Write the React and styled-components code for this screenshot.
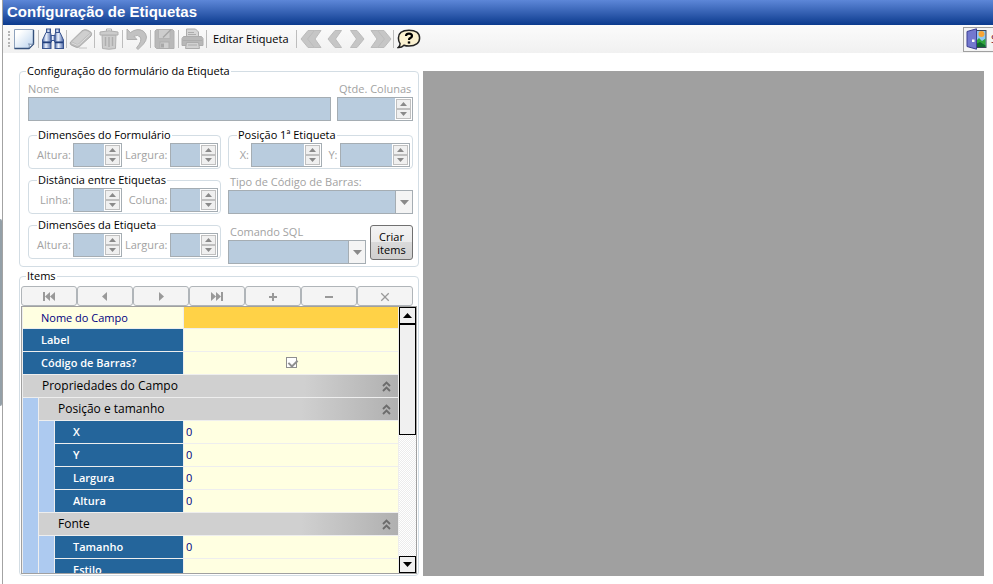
import React, { useState } from 'react';
import styled, { createGlobalStyle } from 'styled-components';

const GlobalStyle = createGlobalStyle`
  * {
    box-sizing: border-box;
  }

  body {
    margin: 0;
    background: #fff;
    color: #000;
    font-family: 'Open Sans', 'Noto Sans', sans-serif;
    font-size: 11px;
    line-height: 14px;
  }

  button, input, select {
    font: inherit;
    color: inherit;
    margin: 0;
    padding: 0;
    border-radius: 0;
  }
`;

const Window = styled.div`
  display: flex;
  height: 100vh;
  overflow: hidden;
`;

const Splitter = styled.div`
  flex: 0 0 3px;
  border-right: 1px solid #a3a3a3;
  display: flex;
  flex-direction: column;
  justify-content: center;
  padding-top: 40px;
`;

const SplitterGrip = styled.div`
  height: 187px;
  background: #94a0a8;
  border-radius: 0 2px 2px 0;
`;

const Page = styled.div`
  flex: 1;
  min-width: 0;
  display: flex;
  flex-direction: column;
`;

const TitleBar = styled.h1`
  flex: none;
  height: 25px;
  margin: 0;
  padding: 0 4px;
  background: linear-gradient(#5d87d8, #3561b3 50%, #0b3a8d);
  color: #fff;
  font: bold 15px/24px 'Liberation Sans', Arial, sans-serif;
`;

const Toolbar = styled.div`
  flex: none;
  display: flex;
  align-items: center;
  height: 28px;
  padding-left: 5px;
  background: linear-gradient(#fbfbfb, #f1f1f1);
`;

const Grip = styled.div`
  width: 3px;
  height: 16px;
  border-left: 2px dotted #b5b5b5;
`;

const ToolButton = styled.button`
  display: flex;
  align-items: center;
  justify-content: center;
  width: ${props => props.$width || 27}px;
  height: 26px;
  border: none;
  background: none;
  white-space: nowrap;
`;

const TextToolButton = styled(ToolButton)`
  width: auto;
  padding: 0 7px 0 6px;
`;

const Separator = styled.div`
  width: 1px;
  height: 18px;
  background: #bdbdbd;
`;

const ExitArea = styled.div`
  display: flex;
  align-items: center;
  gap: 2px;
  flex: 0 0 32px;
  margin-left: auto;
  overflow: hidden;
`;

const ExitButton = styled.button`
  flex: none;
  display: flex;
  align-items: center;
  gap: 4px;
  height: 25px;
  padding: 0 6px 0 2px;
  border: 1px solid #a0a0a0;
  background: #f4f4f4;
  color: #7b1230;
`;

const Main = styled.main`
  flex: 1;
  min-height: 0;
  display: flex;
  gap: 4px;
  padding: 11px 9px 8px 16px;
`;

const SidePanel = styled.div`
  flex: 0 0 400px;
  display: flex;
  flex-direction: column;
  gap: 2px;
`;

const Preview = styled.section`
  flex: 1;
  margin-top: 7px;
  background: #a0a0a0;
`;

const Group = styled.fieldset`
  min-width: 0;
  margin: 0;
  padding: ${props => props.$padding || '0'};
  border: 1px solid #d3dde4;
  border-radius: 4px;
`;

const Legend = styled.legend`
  margin-left: ${props => props.$indent || 6}px;
  padding: 0 1px;
  height: 14px;
  white-space: nowrap;
`;

const ItemsGroup = styled(Group)`
  flex: 1;
  min-height: 0;
  display: flex;
  flex-direction: column;
`;

const NameRow = styled.div`
  display: grid;
  grid-template-columns: 1fr 76px;
  gap: 6px;
`;

const Stack = styled.div`
  flex: 1;
  display: flex;
  flex-direction: column;
  gap: 1px;
  min-width: 0;
  padding-top: ${props => props.$top || 0}px;
`;

const FieldLabel = styled.label`
  padding-left: ${props => props.$indent || 0}px;
  color: #a2a2a2;
  white-space: nowrap;
`;

const FormGrid = styled.div`
  display: grid;
  grid-template-columns: 193px 1fr;
  grid-template-rows: 41px 41px 45px;
  align-items: start;
  gap: 4px 7px;
  padding-top: 7px;
`;

const Pair = styled.div`
  display: grid;
  grid-template-columns: ${props => props.$columns};
  column-gap: 2px;
  align-items: center;
  text-align: right;
`;

const TextBox = styled.input`
  height: 24px;
  width: 100%;
  border: 1px solid #a5adb3;
  background: #b9ccde;
`;

const FieldBox = styled.div`
  display: flex;
  min-width: 0;
  height: 24px;
  border: 1px solid #a5adb3;
  background: #b9ccde;
`;

const NumberInput = styled.input`
  flex: 1;
  width: 0;
  min-width: 0;
  border: none;
  background: none;
  appearance: textfield;
`;

const SpinButtons = styled.div`
  flex: none;
  display: flex;
  flex-direction: column;
  width: 17px;
  padding: 1px;
  background: #fff;
`;

const SpinButton = styled.button`
  flex: 1;
  display: flex;
  align-items: center;
  justify-content: center;
  border: 1px solid #c0c0c0;
  background: #f0f0f0;
`;

const Select = styled.select`
  flex: 1;
  min-width: 0;
  border: none;
  background: none;
  appearance: none;
`;

const SelectArrow = styled.div`
  width: 17px;
  display: flex;
  align-items: center;
  justify-content: center;
  border-left: 1px solid #a5adb3;
  background: #f4f4f4;
`;

const SqlRow = styled.div`
  display: flex;
  align-items: flex-start;
  gap: 4px;
  padding-top: 7px;
`;

const CreateButton = styled.button`
  flex: 0 0 43px;
  height: 35px;
  border: 1px solid #707070;
  border-radius: 3px;
  background: linear-gradient(#f3f3f3, #ebebeb 50%, #dadada 50%, #cfcfcf);
  line-height: 13px;
`;

const Navigator = styled.div`
  flex: none;
  display: flex;
  padding: 3px 5px 0 1px;
`;

const NavButton = styled.button`
  flex: 1;
  display: flex;
  align-items: center;
  justify-content: center;
  height: 20px;
  border: 1px solid #b0b5b9;
  border-radius: 3px;
  background: #f4f4f4;
`;

const GridFrame = styled.div`
  flex: 1;
  min-height: 0;
  display: flex;
  margin: 0 1px 1px;
  border: 1px solid #a0a0a0;
  overflow: hidden;
`;

const GridBody = styled.div`
  flex: 1;
  min-width: 0;
  overflow: hidden;
`;

const PropertyTable = styled.table`
  width: 100%;
  table-layout: fixed;
  border-collapse: separate;
  border-spacing: 1px;
  margin-top: -1px;
  background: #eeeeee;
`;

const Bar = styled.td`
  padding: 0;
  background: #adcaf0;
`;

const NameCell = styled.th`
  height: ${props => (props.$active ? 21 : 22)}px;
  padding: 0 0 0 18px;
  text-align: left;
  font-weight: ${props => (props.$active ? 400 : 600)};
  background: ${props => (props.$active ? '#ffffe1' : '#24659b')};
  color: ${props => (props.$active ? '#000080' : '#fff')};
`;

const ValueCell = styled.td`
  padding: 0;
  vertical-align: top;
  background: ${props => (props.$active ? '#ffd247' : '#ffffe1')};
`;

const ValueInput = styled.input`
  display: block;
  width: 100%;
  height: 20px;
  padding: 0 2px;
  border: none;
  background: none;
  color: #000080;
`;

const CheckBox = styled.input`
  display: block;
  width: 11px;
  height: 11px;
  margin: 5px auto 0;
  appearance: none;
  border: 1px solid #8f8f8f;
  background: #fff;

  &:checked::after {
    content: '';
    display: block;
    width: 4px;
    height: 7px;
    margin: 0 0 0 3px;
    border: solid #8f8f8f;
    border-width: 0 2px 2px 0;
    transform: rotate(45deg);
  }
`;

const HeaderCell = styled.th`
  height: 22px;
  padding: 0;
  background: linear-gradient(to right, #d0d0d0 ${props => props.$start}, #b0b0b0);
`;

const HeaderButton = styled.button`
  display: flex;
  align-items: center;
  justify-content: space-between;
  width: 100%;
  height: 22px;
  padding: 0 7px 0 19px;
  border: none;
  background: none;
  font-size: 12px;
  font-weight: 400;
`;

const ScrollBar = styled.div`
  flex: 0 0 17px;
  display: flex;
  flex-direction: column;
  background: repeating-conic-gradient(#ececec 0 25%, #fff 0 50%) 0 0 / 2px 2px;
`;

const ScrollButton = styled.button`
  flex: none;
  display: flex;
  align-items: center;
  justify-content: center;
  height: 17px;
  border: 1px solid #000;
  background: #f0f0f0;
`;

const ScrollThumb = styled.div`
  flex: 0 0 111px;
  margin-bottom: auto;
  border: 1px solid #000;
  background: #f0f0f0;
`;

const NewIcon = () => (
  <svg width="21" height="22" viewBox="0 0 21 22">
    <defs>
      <linearGradient id="sheet" x1="0" y1="0" x2="1" y2="1">
        <stop offset="0.2" stopColor="#fff" />
        <stop offset="1" stopColor="#b9d2ee" />
      </linearGradient>
    </defs>
    <path d="M0.5 1.5H19.5V16L15 20.5H0.5Z" fill="url(#sheet)" stroke="#8ea2bd" />
    <path d="M0.5 20.5H15L19.5 16V2" fill="none" stroke="#35517c" strokeWidth="1.4" />
    <path d="M15 20C15.6 18 15.4 17 14.6 15.8C16.4 16.6 18 16.4 19.4 15.8Z" fill="#fff" stroke="#5a7398" strokeWidth="0.8" />
  </svg>
);

const BinocularsIcon = () => (
  <svg width="24" height="22" viewBox="0 0 24 22">
    <defs>
      <linearGradient id="tube">
        <stop offset="0" stopColor="#4c6cac" />
        <stop offset="0.4" stopColor="#eef4ff" />
        <stop offset="1" stopColor="#4a67a7" />
      </linearGradient>
    </defs>
    <g fill="url(#tube)" stroke="#3a5590">
      <path d="M5 4.5H9.5L10.5 9V14H1.5V12Z" />
      <path d="M14.5 4.5H19L22.5 12V14H13.5V9Z" />
      <rect x="1.5" y="14.5" width="8.5" height="6" />
      <rect x="14" y="14.5" width="8.5" height="6" />
      <rect x="5.5" y="1" width="4" height="3.5" />
      <rect x="14.5" y="1" width="4" height="3.5" />
      <rect x="10" y="7.5" width="4" height="5" />
    </g>
    <path d="M2 14.5H10M14 14.5H22" stroke="#23407d" strokeWidth="1.4" />
  </svg>
);

const EraserIcon = () => (
  <svg width="24" height="22" viewBox="0 0 24 22">
    <path
      d="M1.5 14L13 2.8Q15.5 1 18 2L21.5 3.8Q23.5 5.4 22 8L10.5 18.6Q9 20 7 19.2L2.5 17.2Q0.2 16 1.5 14Z"
      fill="#bdbdbd"
      stroke="#ababab"
    />
    <path d="M3 13.6L14 3.4Q15.5 2.2 17.5 3L21 4.8L9.5 15.6Q8.5 16.2 7.5 15.8Z" fill="#cfcfcf" />
    <path d="M2.5 14.8L7.5 17Q9 17.4 10 16.6L21.5 6" fill="none" stroke="#dedede" />
    <path d="M10 20H18" stroke="#c4c4c4" />
  </svg>
);

const TrashIcon = () => (
  <svg width="20" height="22" viewBox="0 0 20 22">
    <g fill="#cccccc" stroke="#b0b0b0">
      <path d="M3 7H17L16.5 20.5Q10 22 3.5 20.5Z" />
      <path d="M1 4Q10 1.5 19 4V7H1Z" />
      <path d="M7.5 3V1H12.5V3" fill="none" />
    </g>
    <path d="M6.5 9V18M10 9V19M13.5 9V18" stroke="#aeaeae" strokeWidth="1.5" />
  </svg>
);

const UndoIcon = () => (
  <svg width="22" height="22" viewBox="0 0 22 22">
    <path
      d="M1 1L4.4 4.6Q11 -0.4 17.2 3Q23.6 8.6 17.5 16L12 21.5L10.5 20Q16.6 12.6 14.2 9Q11.5 6 8 8.4L11 11.5H1Z"
      fill="#c2c2c2"
      stroke="#b0b0b0"
      strokeLinejoin="round"
    />
  </svg>
);

const SaveIcon = () => (
  <svg width="21" height="22" viewBox="0 0 21 22">
    <path d="M2.5 1.5H18.5L20 3V20.5H2.5L1 19V3Z" fill="#b9b9b9" stroke="#b0b0b0" />
    <rect x="4.5" y="1.5" width="11.5" height="9" fill="#cdcdcd" stroke="#b4b4b4" />
    <rect x="6" y="14" width="9" height="6.5" fill="#cfcfcf" stroke="#adadad" />
    <rect x="7" y="15.5" width="3" height="4" fill="#a8a8a8" />
    <path d="M9 9.5L17 1.5" stroke="#a5a5a5" strokeWidth="1.4" />
  </svg>
);

const PrintIcon = () => (
  <svg width="23" height="22" viewBox="0 0 23 22">
    <g stroke="#acacac">
      <path d="M5.5 1H14.5L17.5 4V10H5.5Z" fill="#d6d6d6" />
      <path d="M2.5 8.5H20.5L22 10.5V17.5H1V10.5Z" fill="#b8b8b8" />
      <path d="M5.5 14.5H17.5L18.5 20.5H4.5Z" fill="#d2d2d2" />
      <path d="M7 4.5H13M7 6.5H15M2 12.5H21M7 17H16" fill="none" />
    </g>
  </svg>
);

const Chevrons = ({ double, flip }) => (
  <svg width={double ? 22 : 16} height="20" viewBox={double ? '0 0 22 20' : '0 0 16 20'}>
    <g
      fill="#c6c6c6"
      stroke="#bcbcbc"
      transform={flip ? `translate(${double ? 22 : 16} 0) scale(-1 1)` : undefined}
    >
      <path d="M8 1.5H14.5L8.5 10L14.5 18.5H8L1 10Z" />
      {double && <path d="M14.5 1.5H21L15 10L21 18.5H14.5L7.5 10Z" />}
    </g>
  </svg>
);

const HelpIcon = () => (
  <svg width="24" height="20" viewBox="0 0 24 20">
    <path
      d="M12 1.2C18.5 1.2 22.6 4 22.6 9S18.5 17 12 17C10 17 8.5 16.8 7 16.2C5.5 17.8 3.5 18.6 1.2 18.5C2.8 17.3 3.2 15.8 3 14.4C1.8 13 1.4 11 1.4 9C1.4 4 5.5 1.2 12 1.2Z"
      fill="#fbf1d0"
      stroke="#222"
      strokeWidth="1.5"
    />
    <path d="M9 7Q9 4.6 12 4.6T15 7Q15 8.4 13.2 9.1Q12 9.6 12 11" fill="none" stroke="#000" strokeWidth="2.2" />
    <rect x="10.8" y="12.4" width="2.4" height="2.2" />
  </svg>
);

const DoorIcon = () => (
  <svg width="21" height="22" viewBox="0 0 21 22">
    <rect x="8" y="2.5" width="12" height="17" fill="#8cc8f5" stroke="#3e4658" />
    <circle cx="15.5" cy="6" r="3" fill="#f9a534" />
    <path d="M10 13L13 10L16 13L19.5 10.5V19H10Z" fill="#2fa53b" />
    <path d="M10 16L14 14L19.5 17.5V19H10Z" fill="#0f6a2d" />
    <path d="M1 3.5L10.5 0.8V21.2L1 18.5Z" fill="#7378cf" stroke="#3c3f92" />
    <rect x="6" y="11.5" width="2.5" height="2.5" fill="#fff" />
  </svg>
);

const Triangle = ({ up, size = 5, color = '#8a8a8a' }) => (
  <svg width={size * 2 - 3} height={size - 1} viewBox="0 0 8 4" preserveAspectRatio="none">
    <path d={up ? 'M0 4L4 0L8 4Z' : 'M0 0L4 4L8 0Z'} fill={color} />
  </svg>
);

const CollapseIcon = () => (
  <svg width="9" height="11" viewBox="0 0 9 11">
    <path d="M1 5L4.5 1.5L8 5M1 10L4.5 6.5L8 10" fill="none" stroke="#6c6c6c" strokeWidth="1.9" />
  </svg>
);

const navItems = [
  { label: 'Primeiro', path: 'M1 1H3V10H1ZM8 1V10L3 5.5ZM13 1V10L8 5.5Z' },
  { label: 'Anterior', path: 'M9 1V10L4 5.5Z' },
  { label: 'Próximo', path: 'M5 1V10L10 5.5Z' },
  { label: 'Último', path: 'M1 1V10L6 5.5ZM6 1V10L11 5.5ZM11 1H13V10H11Z' },
  { label: 'Inserir', path: 'M6 2H8V5H11V7H8V10H6V7H3V5H6Z' },
  { label: 'Excluir', path: 'M3 5H11V7H3Z' },
  { label: 'Cancelar', path: 'M3.7 1.8L7 5.1L10.3 1.8L11.2 2.7L7.9 6L11.2 9.3L10.3 10.2L7 6.9L3.7 10.2L2.8 9.3L6.1 6L2.8 2.7Z' },
];

const tools = [
  { label: 'Novo', icon: <NewIcon /> },
  { label: 'Localizar', icon: <BinocularsIcon /> },
  { label: 'Limpar', icon: <EraserIcon /> },
  { label: 'Excluir', icon: <TrashIcon /> },
  { label: 'Desfazer', icon: <UndoIcon /> },
  { label: 'Salvar', icon: <SaveIcon /> },
  { label: 'Imprimir', icon: <PrintIcon /> },
];

const positionFields = ['X', 'Y', 'Largura', 'Altura'];

function Spinner({ id }) {
  return (
    <FieldBox>
      <NumberInput id={id} type="number" disabled />
      <SpinButtons>
        <SpinButton aria-label="Aumentar" disabled><Triangle up /></SpinButton>
        <SpinButton aria-label="Diminuir" disabled><Triangle /></SpinButton>
      </SpinButtons>
    </FieldBox>
  );
}

function DropDown({ id }) {
  return (
    <FieldBox>
      <Select id={id} disabled />
      <SelectArrow><Triangle size={6} /></SelectArrow>
    </FieldBox>
  );
}

function SpinnerGroup({ title, columns, fields }) {
  return (
    <Group $padding="1px 2px 1px 4px">
      <Legend $indent={4}>{title}</Legend>
      <Pair $columns={columns}>
        {fields.map(([id, label]) => (
          <React.Fragment key={id}>
            <FieldLabel htmlFor={id}>{label}</FieldLabel>
            <Spinner id={id} />
          </React.Fragment>
        ))}
      </Pair>
    </Group>
  );
}

function SectionHeader({ title, span, start }) {
  return (
    <HeaderCell colSpan={span} $start={start}>
      <HeaderButton>
        {title}
        <CollapseIcon />
      </HeaderButton>
    </HeaderCell>
  );
}

function NumberRow({ name, value }) {
  return (
    <>
      <NameCell scope="row">{name}</NameCell>
      <ValueCell><ValueInput aria-label={name} defaultValue={value} /></ValueCell>
    </>
  );
}

function App() {
  const [isBarcode, setIsBarcode] = useState(true);

  return (
    <Window>
      <GlobalStyle />
      <Splitter>
        <SplitterGrip />
      </Splitter>

      <Page>
        <TitleBar>Configuração de Etiquetas</TitleBar>

        <Toolbar>
          <Grip />
          {tools.map(tool => (
            <React.Fragment key={tool.label}>
              <ToolButton aria-label={tool.label}>{tool.icon}</ToolButton>
              <Separator />
            </React.Fragment>
          ))}
          <TextToolButton>Editar Etiqueta</TextToolButton>
          <Separator />
          <ToolButton $width={28} aria-label="Primeiro registro"><Chevrons double /></ToolButton>
          <ToolButton $width={20} aria-label="Registro anterior"><Chevrons /></ToolButton>
          <ToolButton $width={24} aria-label="Próximo registro"><Chevrons flip /></ToolButton>
          <ToolButton $width={24} aria-label="Último registro"><Chevrons double flip /></ToolButton>
          <Separator />
          <ToolButton $width={30} aria-label="Ajuda"><HelpIcon /></ToolButton>
          <ExitArea>
            <Separator />
            <ExitButton>
              <DoorIcon />
              Sair
            </ExitButton>
          </ExitArea>
        </Toolbar>

        <Main>
          <SidePanel>
            <Group $padding="4px 5px 3px 8px">
              <Legend $indent={-2}>Configuração do formulário da Etiqueta</Legend>
              <NameRow>
                <Stack>
                  <FieldLabel htmlFor="nome">Nome</FieldLabel>
                  <TextBox id="nome" type="text" disabled />
                </Stack>
                <Stack>
                  <FieldLabel htmlFor="colunas" $indent={2}>Qtde. Colunas</FieldLabel>
                  <Spinner id="colunas" />
                </Stack>
              </NameRow>

              <FormGrid>
                <SpinnerGroup
                  title="Dimensões do Formulário"
                  columns="38px 1fr 44px 1fr"
                  fields={[['formAltura', 'Altura:'], ['formLargura', 'Largura:']]}
                />
                <SpinnerGroup
                  title="Posição 1ª Etiqueta"
                  columns="16px 1fr 14px 1fr"
                  fields={[['posX', 'X:'], ['posY', 'Y:']]}
                />
                <SpinnerGroup
                  title="Distância entre Etiquetas"
                  columns="38px 1fr 44px 1fr"
                  fields={[['distLinha', 'Linha:'], ['distColuna', 'Coluna:']]}
                />
                <Stack $top={2}>
                  <FieldLabel htmlFor="tipoCodigo" $indent={2}>Tipo de Código de Barras:</FieldLabel>
                  <DropDown id="tipoCodigo" />
                </Stack>
                <SpinnerGroup
                  title="Dimensões da Etiqueta"
                  columns="38px 1fr 44px 1fr"
                  fields={[['etiqAltura', 'Altura:'], ['etiqLargura', 'Largura:']]}
                />
                <SqlRow>
                  <Stack>
                    <FieldLabel htmlFor="comandoSql" $indent={2}>Comando SQL</FieldLabel>
                    <DropDown id="comandoSql" />
                  </Stack>
                  <CreateButton>Criar items</CreateButton>
                </SqlRow>
              </FormGrid>
            </Group>

            <ItemsGroup>
              <Legend>Items</Legend>
              <Navigator>
                {navItems.map(item => (
                  <NavButton key={item.label} aria-label={item.label} disabled>
                    <svg width="14" height="11" viewBox="0 0 14 11">
                      <path d={item.path} fill="#999" />
                    </svg>
                  </NavButton>
                ))}
              </Navigator>
              <GridFrame>
                <GridBody>
                  <PropertyTable>
                    <colgroup>
                      <col width="15" />
                      <col width="15" />
                      <col width="128" />
                      <col />
                    </colgroup>
                    <tbody>
                      <tr>
                        <NameCell colSpan={3} scope="row" $active>Nome do Campo</NameCell>
                        <ValueCell $active><ValueInput aria-label="Nome do Campo" /></ValueCell>
                      </tr>
                      <tr>
                        <NameCell colSpan={3} scope="row">Label</NameCell>
                        <ValueCell><ValueInput aria-label="Label" /></ValueCell>
                      </tr>
                      <tr>
                        <NameCell colSpan={3} scope="row">Código de Barras?</NameCell>
                        <ValueCell>
                          <CheckBox
                            type="checkbox"
                            aria-label="Código de Barras?"
                            checked={isBarcode}
                            onChange={() => setIsBarcode(!isBarcode)}
                          />
                        </ValueCell>
                      </tr>
                      <tr>
                        <SectionHeader title="Propriedades do Campo" span={4} start="75%" />
                      </tr>
                      <tr>
                        <Bar rowSpan={8} />
                        <SectionHeader title="Posição e tamanho" span={3} start="73%" />
                      </tr>
                      {positionFields.map((name, index) => (
                        <tr key={name}>
                          {index === 0 && <Bar rowSpan={positionFields.length} />}
                          <NumberRow name={name} value="0" />
                        </tr>
                      ))}
                      <tr>
                        <SectionHeader title="Fonte" span={3} start="73%" />
                      </tr>
                      <tr>
                        <Bar rowSpan={2} />
                        <NumberRow name="Tamanho" value="0" />
                      </tr>
                      <tr>
                        <NumberRow name="Estilo" value="" />
                      </tr>
                    </tbody>
                  </PropertyTable>
                </GridBody>
                <ScrollBar>
                  <ScrollButton aria-label="Rolar para cima"><Triangle up size={6} color="#000" /></ScrollButton>
                  <ScrollThumb />
                  <ScrollButton aria-label="Rolar para baixo"><Triangle size={6} color="#000" /></ScrollButton>
                </ScrollBar>
              </GridFrame>
            </ItemsGroup>
          </SidePanel>

          <Preview aria-label="Visualização da etiqueta" />
        </Main>
      </Page>
    </Window>
  );
}

export default App;
